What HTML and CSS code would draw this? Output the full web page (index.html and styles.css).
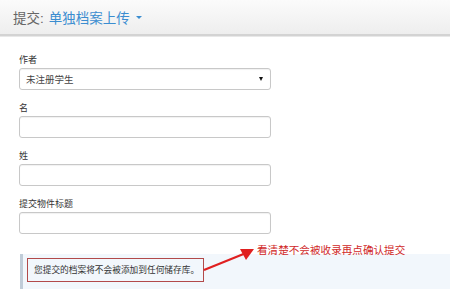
FILE: index.html
```html
<!DOCTYPE html>
<html lang="zh-CN">
<head>
  <meta charset="UTF-8">
  <title>提交: 单独档案上传</title>
  <link rel="stylesheet" href="styles.css">
</head>
<body>
<div class="page-header">
  <span class="title-prefix">提交:</span>
  <span class="title-link">单独档案上传<span class="caret"></span></span>
</div>

<form class="submit-form">
  <div class="field">
    <label>作者</label>
    <div class="select-box">
      <span>未注册学生</span>
      <span class="select-arrow"></span>
    </div>
  </div>
  <div class="field">
    <label>名</label>
    <input type="text">
  </div>
  <div class="field">
    <label>姓</label>
    <input type="text">
  </div>
  <div class="field">
    <label>提交物件标题</label>
    <input type="text">
  </div>

  <div class="notice">
    <span class="notice-text">您提交的档案将不会被添加到任何储存库。</span>
  </div>
</form>

<!-- annotation drawn over the page -->
<div class="note-label">看清楚不会被收录再点确认提交</div>
<svg class="note-arrow" width="60" height="30" viewBox="0 0 60 30">
  <line x1="2" y1="26" x2="44" y2="9" stroke="#e02020" stroke-width="2.2"/>
  <polygon points="52,5 38,5 44,16" fill="#e02020"/>
</svg>
</body>
</html>
```

FILE: styles.css
```css
html, body { margin: 0; padding: 0; background: #fff; font-family: "Liberation Sans", "Noto Sans CJK SC", sans-serif; color: #333; }
body { position: relative; width: 450px; height: 296px; overflow: hidden; }

.page-header {
  height: 34px; display: flex; align-items: center; padding-left: 13px;
  background: linear-gradient(#fbfbfb, #eeeeee);
  border-bottom: 2px solid #d3d3d3; box-shadow: 0 1px 0 #e8e8e8;
  font-size: 13.5px;
}
.title-prefix { color: #666; margin-right: 5px; }
.title-link { color: #3b8dd0; display: flex; align-items: center; }
.caret { display: inline-block; margin-left: 6px; border-left: 3px solid transparent; border-right: 3px solid transparent; border-top: 3px solid #3b8dd0; }

.submit-form { padding: 18px 0 0 19px; }
.field { width: 252px; margin-bottom: 12px; }
.field label { display: block; font-size: 9px; line-height: 12px; margin-bottom: 2px; color: #333; }
.field input, .select-box {
  box-sizing: border-box; width: 252px; height: 22px; border: 1px solid #c8c8c8; border-radius: 3px;
  box-shadow: inset 0 1px 1px rgba(0,0,0,0.06); background: #fff; margin: 0; padding: 0 6px;
}
.select-box { display: flex; align-items: center; justify-content: space-between; font-size: 9.5px; color: #444; }
.select-arrow { border-left: 2.5px solid transparent; border-right: 2.5px solid transparent; border-top: 4px solid #111; margin-right: 1px; }

.notice {
  margin-top: 20px; height: 35px; box-sizing: border-box; display: flex; align-items: center;
  margin-left: 1px; padding-left: 4px; background: #f2f7fc; border-left: 3px solid #c0ccd8;
}
.notice-text {
  display: inline-block; border: 1px solid #b24a4a; padding: 0 4px 0 6px; line-height: 22px;
  font-size: 8.7px; color: #333; margin-top: -4px;
}

.note-label { position: absolute; left: 257px; top: 242px; font-size: 10.6px; color: #d02828; }
.note-arrow { position: absolute; left: 202px; top: 244px; }
```
